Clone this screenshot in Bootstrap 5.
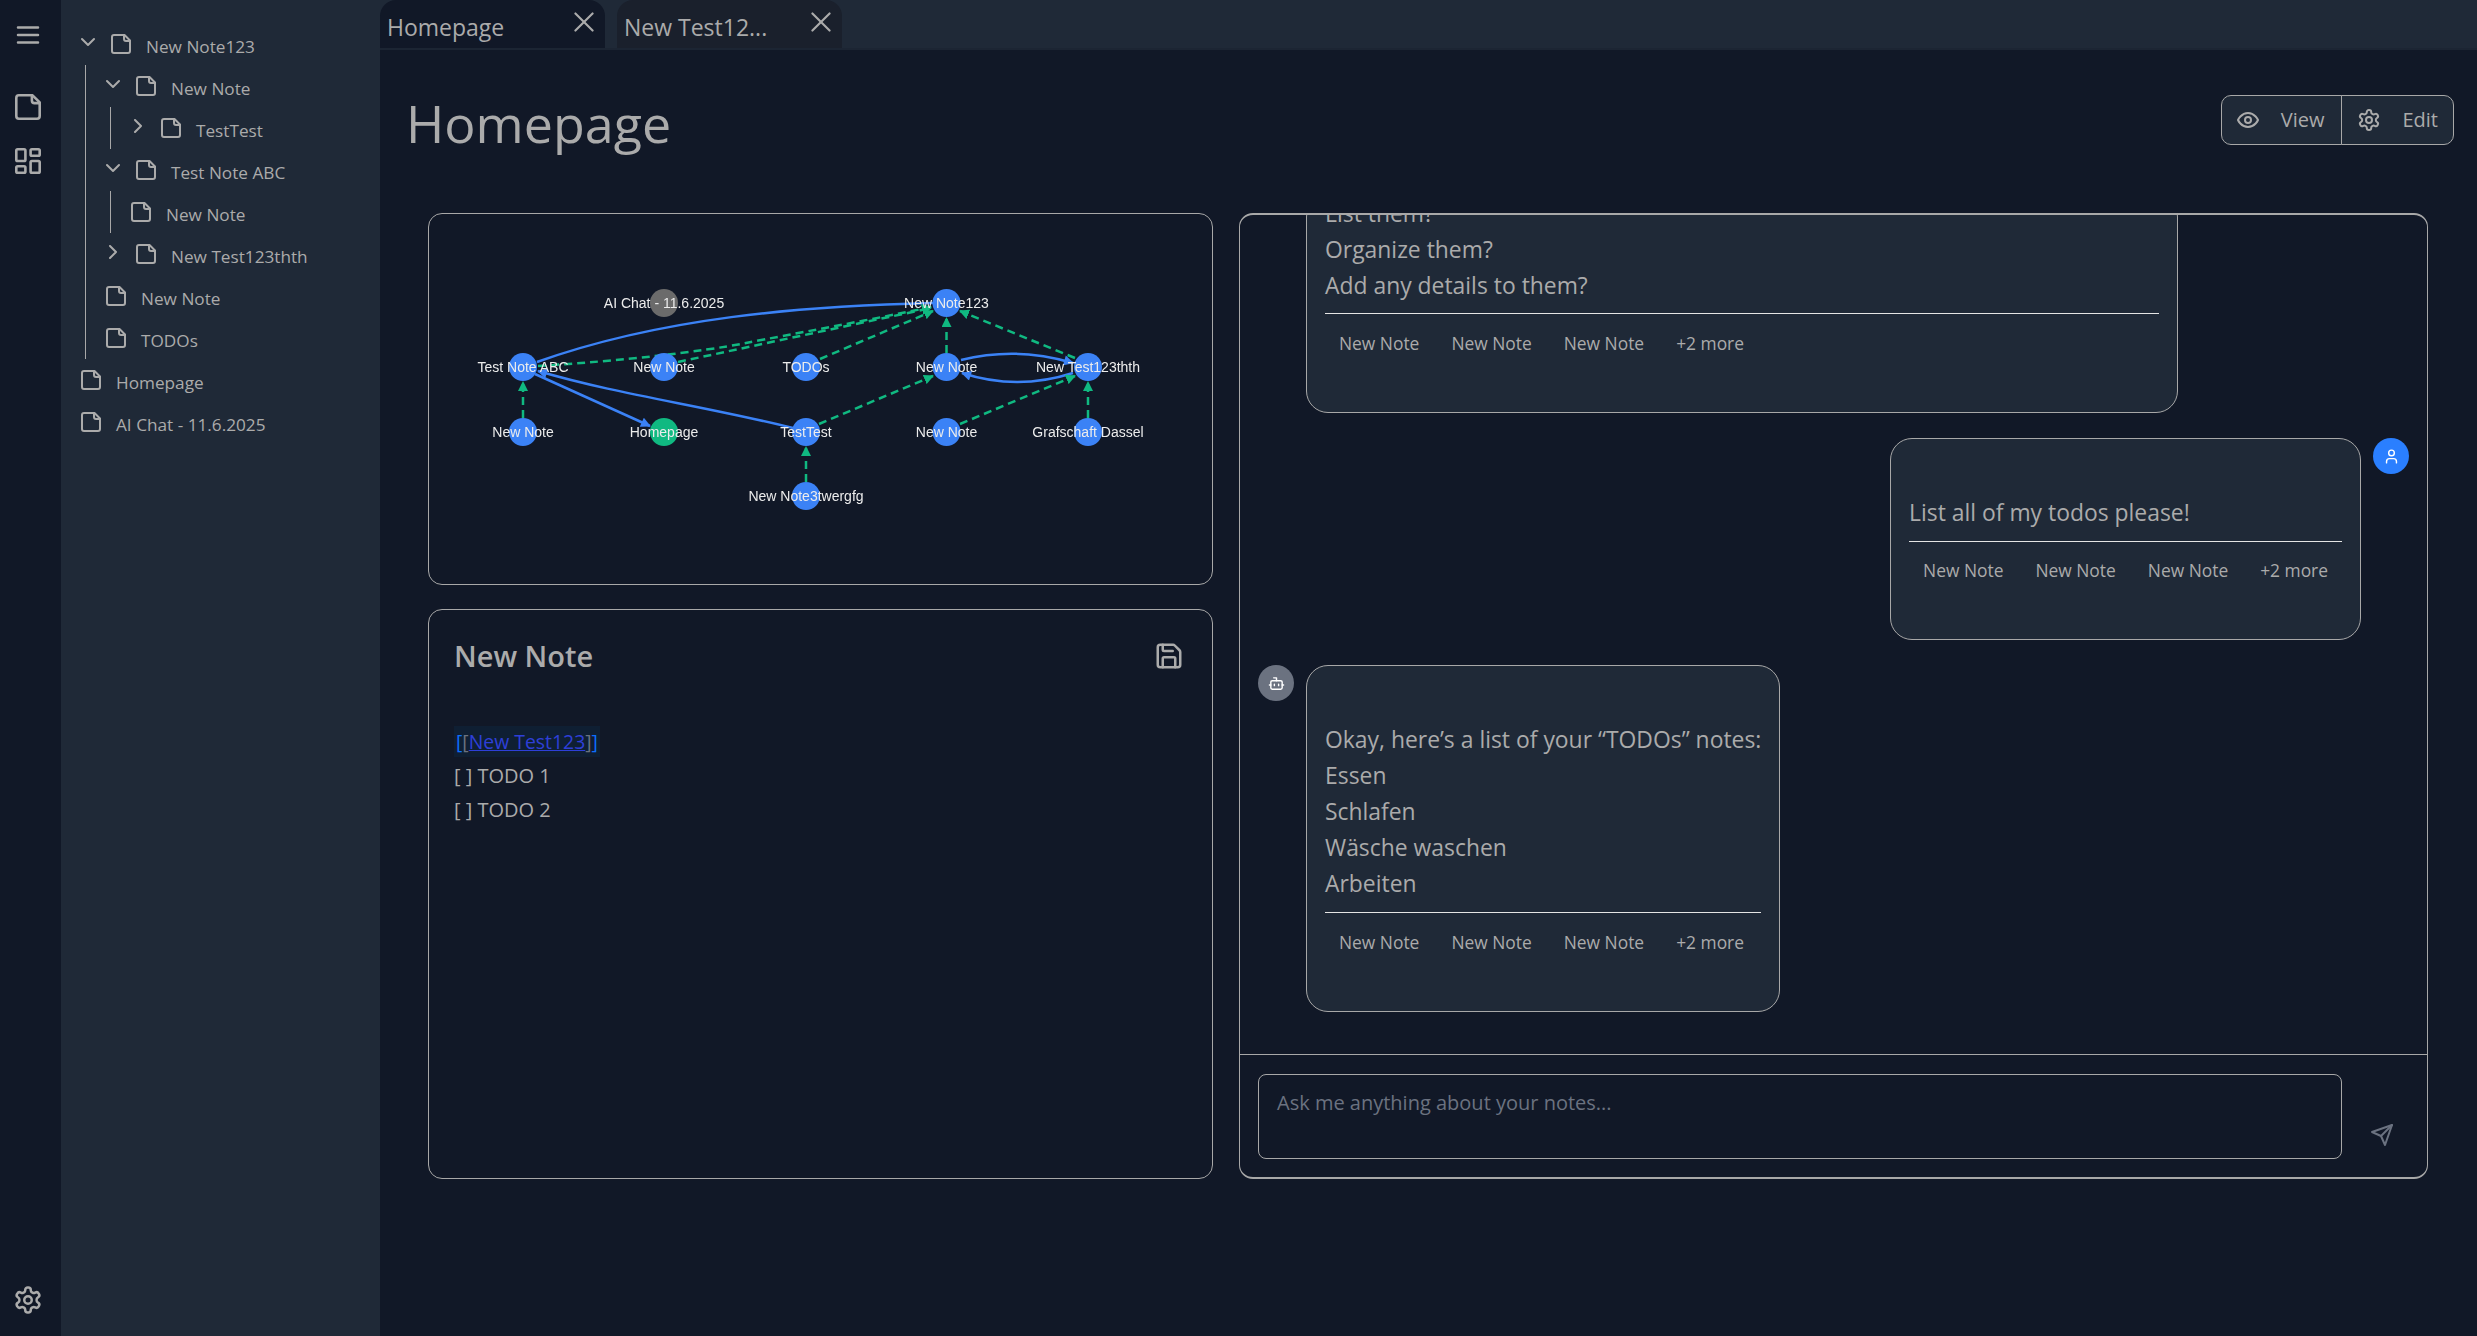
<!DOCTYPE html>
<html lang="en">
<head>
<meta charset="utf-8">
<title>Homepage</title>
<link href="https://cdn.jsdelivr.net/npm/bootstrap@5.3.0/dist/css/bootstrap.min.css" rel="stylesheet">
<style>
:root{--ink:#ababab;--line:#a8a8a8;--deep:#111827;--panel:#1f2937}
html,body{height:100%}
body{background:var(--deep);color:var(--ink);font-family:"Open Sans","Liberation Sans",sans-serif;overflow:hidden}
svg.ico{fill:none;stroke:currentColor;stroke-width:2;stroke-linecap:round;stroke-linejoin:round;flex:none;display:block}
.rail{width:61px;background:var(--deep);flex:none;padding:20px 5px 21px 0}
.rail-btn{display:block;color:var(--ink)}
.rail-file{margin-top:44px}
.rail-grid{margin-top:28px}
.side{width:319px;background:var(--panel);flex:none;padding:23px 0 0 20px;font-size:17.2px}
.tree-row{height:42px;display:flex;align-items:center;white-space:nowrap}
.tree-row .chev{width:14px;height:14px;margin-right:16px;margin-top:-5px}
.tree-row .doc{width:20px;height:20px;margin-right:15px;margin-top:-1px}
.tree-row span{position:relative;top:3px}
.kids{margin-left:4px;border-left:1px solid var(--line);padding-left:20px}
.tabbar{height:50px;background:var(--panel);gap:12px;border-bottom:2px solid #1c2533;flex:none}
.tab-item{width:225px;height:48px;background:#1a202c;border-radius:16px 16px 0 0;padding:0 11px 0 7px;font-size:23px;color:var(--ink)}
.tab-item.on{background:var(--deep)}
.tab-item .x{width:20px;height:20px;margin-top:-5px;stroke-width:1.5}
.tab-label{position:relative;top:3px}
.page-head{height:163px;padding:45px 23px 0 26px;flex:none}
.page-title{font-size:52px;font-weight:400;line-height:55px;margin:0;color:var(--ink)}
.view-group .btn{background:var(--panel);color:var(--ink);border:1px solid var(--line);font-size:20px;height:50px;display:flex;align-items:center;border-radius:10px;padding:0 17px 0 14px}
.view-group .btn svg{margin-right:21px}
.view-group .btn + .btn{border-top-left-radius:0;border-bottom-left-radius:0;padding:0 15px 0 15px}
.view-group .btn:first-child{border-top-right-radius:0;border-bottom-right-radius:0}
.board{display:grid;grid-template-columns:785px 1189px;gap:26px;margin-left:48px;height:966px}
.board .card{background:var(--deep);border:1px solid var(--line);border-radius:14px;color:var(--ink)}
.graph-card{height:372px;overflow:hidden}
.graph-card svg{display:block;width:100%;height:100%;filter:blur(.35px)}
.note-card{flex:1;padding:24px 28px 0 25px}
.note-name{font-size:29px;font-weight:600;margin:0;line-height:44px}
.note-body{padding-top:47px;font-size:20px;line-height:33.6px}
.wiki{background:#0f1f33;display:inline-block;padding:0 2px;line-height:31px;margin-bottom:2px;font-size:19.4px}
.wiki i{font-style:normal;color:#0d6efd}.wiki b{font-weight:400;color:#6b7280}
.wiki a{color:#2e3fd8}
.chat-card{overflow:hidden;border-width:2px 1px 2px 1px!important}
.chat-log{flex:1;min-height:0;overflow:hidden;padding:0 18px 42px;gap:25px}
.who{width:36px;height:36px;border-radius:50%;color:#fff;flex:none}
.who.me{background:#2a7fff}.who.bot{background:#6b7280}
.bubble{background:var(--panel);border:1px solid var(--line);border-radius:22px;padding:56px 18px 54px;flex:none}
.bubble.wide{width:872px;padding-top:0}
.bubble.wide hr{margin-top:9px}
.bubble.tight hr{margin-bottom:13px}
.bubble p{margin:0;font-size:22.9px;line-height:36px;white-space:nowrap}
.bubble hr{margin:10px 0 14px;opacity:1;border-top:1px solid #e5e5e5}
.chip-row{gap:4px;height:30px;font-size:17.4px;line-height:30px}
.chip-row span{padding:0 14px;white-space:nowrap}
.composer{border-top:1px solid var(--line);padding:18px 0 18px 18px;height:123px;flex:none;gap:0}
.ask{width:1084px;height:85px;flex:none;background:transparent!important;border:1px solid var(--line);border-radius:8px;color:var(--ink);font-size:20px;padding:13px 18px;resize:none}
.ask::placeholder{color:#6b7280}
.send{background:none;border:0;padding:0;color:#6b7280;margin:0 0 12px 28px;width:24px;height:24px}
.gl{font:14px "Liberation Sans",Arial,sans-serif;fill:#ececec;text-anchor:middle;dominant-baseline:central}
.blue{stroke:#3b82f6;stroke-width:2.5;fill:none}
.green{stroke:#10b981;stroke-width:2.5;stroke-dasharray:8 5;fill:none}
</style>
</head>
<body>
<svg width="0" height="0" class="position-absolute">
<defs>
<symbol id="i-doc" viewBox="2 2 20 20"><path d="M15.5 3H5a2 2 0 0 0-2 2v14c0 1.1.9 2 2 2h14a2 2 0 0 0 2-2V8.5L15.5 3Z"/><path d="M15 3v4a2 2 0 0 0 2 2h4"/></symbol>
<symbol id="i-down" viewBox="5 5 14 14"><path d="m6 9 6 6 6-6"/></symbol>
<symbol id="i-right" viewBox="5 5 14 14"><path d="m9 6 6 6-6 6"/></symbol>
<symbol id="i-x" viewBox="5 5 14 14"><path d="M18 6 6 18"/><path d="m6 6 12 12"/></symbol>
<symbol id="i-gear" viewBox="0 0 24 24"><path d="M12.22 2h-.44a2 2 0 0 0-2 2v.18a2 2 0 0 1-1 1.73l-.43.25a2 2 0 0 1-2 0l-.15-.08a2 2 0 0 0-2.73.73l-.22.38a2 2 0 0 0 .73 2.73l.15.1a2 2 0 0 1 1 1.72v.51a2 2 0 0 1-1 1.74l-.15.09a2 2 0 0 0-.73 2.73l.22.38a2 2 0 0 0 2.73.73l.15-.08a2 2 0 0 1 2 0l.43.25a2 2 0 0 1 1 1.73V20a2 2 0 0 0 2 2h.44a2 2 0 0 0 2-2v-.18a2 2 0 0 1 1-1.73l.43-.25a2 2 0 0 1 2 0l.15.08a2 2 0 0 0 2.73-.73l.22-.39a2 2 0 0 0-.73-2.73l-.15-.08a2 2 0 0 1-1-1.74v-.5a2 2 0 0 1 1-1.74l.15-.09a2 2 0 0 0 .73-2.73l-.22-.38a2 2 0 0 0-2.73-.73l-.15.08a2 2 0 0 1-2 0l-.43-.25a2 2 0 0 1-1-1.73V4a2 2 0 0 0-2-2z"/><circle cx="12" cy="12" r="3"/></symbol>
<marker id="ab" viewBox="0 0 10 10" refX="9" refY="5" markerWidth="11" markerHeight="10" markerUnits="userSpaceOnUse" orient="auto"><path d="M0 0 10 5 0 10z" fill="#3b82f6"/></marker>
<marker id="ag" viewBox="0 0 10 10" refX="9" refY="5" markerWidth="10" markerHeight="10" markerUnits="userSpaceOnUse" orient="auto"><path d="M0 0 10 5 0 10z" fill="#10b981"/></marker>
</defs>
</svg>
<div class="d-flex h-100">
  <nav class="rail d-flex flex-column align-items-center">
    <a class="rail-btn" href="#" aria-label="Menu"><svg class="ico" width="30" height="30" viewBox="0 0 24 24"><path d="M4 6h16M4 12h16M4 18h16"/></svg></a>
    <a class="rail-btn rail-file" href="#" aria-label="Notes"><svg class="ico" width="26" height="26"><use href="#i-doc"/></svg></a>
    <a class="rail-btn rail-grid" href="#" aria-label="Dashboard"><svg class="ico" width="26" height="26" viewBox="2 2 20 20"><rect x="3" y="3" width="7" height="9" rx="1"/><rect x="14" y="3" width="7" height="5" rx="1"/><rect x="14" y="12" width="7" height="9" rx="1"/><rect x="3" y="16" width="7" height="5" rx="1"/></svg></a>
    <a class="rail-btn mt-auto" href="#" aria-label="Settings"><svg class="ico" width="30" height="30"><use href="#i-gear"/></svg></a>
  </nav>
  <aside class="side">
    <div class="tree-row"><svg class="ico chev"><use href="#i-down"/></svg><svg class="ico doc"><use href="#i-doc"/></svg><span>New Note123</span></div>
    <div class="kids">
      <div class="tree-row"><svg class="ico chev"><use href="#i-down"/></svg><svg class="ico doc"><use href="#i-doc"/></svg><span>New Note</span></div>
      <div class="kids">
        <div class="tree-row"><svg class="ico chev"><use href="#i-right"/></svg><svg class="ico doc"><use href="#i-doc"/></svg><span>TestTest</span></div>
      </div>
      <div class="tree-row"><svg class="ico chev"><use href="#i-down"/></svg><svg class="ico doc"><use href="#i-doc"/></svg><span>Test Note ABC</span></div>
      <div class="kids">
        <div class="tree-row"><svg class="ico doc"><use href="#i-doc"/></svg><span>New Note</span></div>
      </div>
      <div class="tree-row"><svg class="ico chev"><use href="#i-right"/></svg><svg class="ico doc"><use href="#i-doc"/></svg><span>New Test123thth</span></div>
      <div class="tree-row"><svg class="ico doc"><use href="#i-doc"/></svg><span>New Note</span></div>
      <div class="tree-row"><svg class="ico doc"><use href="#i-doc"/></svg><span>TODOs</span></div>
    </div>
    <div class="tree-row"><svg class="ico doc"><use href="#i-doc"/></svg><span>Homepage</span></div>
    <div class="tree-row"><svg class="ico doc"><use href="#i-doc"/></svg><span>AI Chat - 11.6.2025</span></div>
  </aside>
  <main class="flex-grow-1 d-flex flex-column" style="min-width:0">
    <div class="tabbar d-flex">
      <div class="tab-item on d-flex align-items-center justify-content-between"><span class="tab-label">Homepage</span><svg class="ico x"><use href="#i-x"/></svg></div>
      <div class="tab-item d-flex align-items-center justify-content-between"><span class="tab-label">New Test12...</span><svg class="ico x"><use href="#i-x"/></svg></div>
    </div>
    <div class="page-head d-flex justify-content-between align-items-start">
      <h1 class="page-title">Homepage</h1>
      <div class="btn-group view-group">
        <button type="button" class="btn"><svg class="ico" width="24" height="24" viewBox="0 0 24 24"><path d="M2 12s3-7 10-7 10 7 10 7-3 7-10 7-10-7-10-7Z"/><circle cx="12" cy="12" r="3"/></svg>View</button>
        <button type="button" class="btn"><svg class="ico" width="24" height="24"><use href="#i-gear"/></svg>Edit</button>
      </div>
    </div>
    <div class="board">
      <div class="d-flex flex-column gap-4" style="min-height:0">
        <div class="card graph-card">
          <svg viewBox="429 214 783 370">
            <path class="blue" d="M537 362C660 318 800 306 933 303"/>
            <path class="blue" d="M535 374 650 426" marker-end="url(#ab)"/>
            <path class="blue" d="M793 428C700 405 620 395 538 371" marker-end="url(#ab)"/>
            <path class="blue" d="M961 360Q1017 346 1073 363" marker-end="url(#ab)"/>
            <path class="blue" d="M1073 373Q1017 391 962 373" marker-end="url(#ab)"/>
            <path class="green" d="M523 418V382" marker-end="url(#ag)"/>
            <path class="green" d="M538 366C620 361 700 352 746 343S870 320 931 307" marker-end="url(#ag)"/>
            <path class="green" d="M678 362 931 308" marker-end="url(#ag)"/>
            <path class="green" d="M820 359 933 311" marker-end="url(#ag)"/>
            <path class="green" d="M946.5 353V318" marker-end="url(#ag)"/>
            <path class="green" d="M1075 358 960 311" marker-end="url(#ag)"/>
            <path class="green" d="M819 424 933 376" marker-end="url(#ag)"/>
            <path class="green" d="M960 424 1075 376" marker-end="url(#ag)"/>
            <path class="green" d="M1088 418V382" marker-end="url(#ag)"/>
            <path class="green" d="M806 482V447" marker-end="url(#ag)"/>
            <g fill="#3b82f6">
              <circle cx="946.5" cy="303" r="14"/>
              <circle cx="523" cy="367" r="14"/><circle cx="664" cy="367" r="14"/><circle cx="806" cy="367" r="14"/><circle cx="946.5" cy="367" r="14"/><circle cx="1088" cy="367" r="14"/>
              <circle cx="523" cy="432" r="14"/><circle cx="806" cy="432" r="14"/><circle cx="946.5" cy="432" r="14"/><circle cx="1088" cy="432" r="14"/>
              <circle cx="806" cy="496" r="14"/>
            </g>
            <circle cx="664" cy="303" r="14" fill="#6b6b6b"/>
            <circle cx="664" cy="432" r="14" fill="#10b981"/>
            <text class="gl" x="664" y="303">AI Chat - 11.6.2025</text>
            <text class="gl" x="946.5" y="303">New Note123</text>
            <text class="gl" x="523" y="367">Test Note ABC</text>
            <text class="gl" x="664" y="367">New Note</text>
            <text class="gl" x="806" y="367">TODOs</text>
            <text class="gl" x="946.5" y="367">New Note</text>
            <text class="gl" x="1088" y="367">New Test123thth</text>
            <text class="gl" x="523" y="432">New Note</text>
            <text class="gl" x="664" y="432">Homepage</text>
            <text class="gl" x="806" y="432">TestTest</text>
            <text class="gl" x="946.5" y="432">New Note</text>
            <text class="gl" x="1088" y="432">Grafschaft Dassel</text>
            <text class="gl" x="806" y="496">New Note3twergfg</text>
          </svg>
        </div>
        <div class="card note-card">
          <div class="d-flex justify-content-between align-items-center">
            <h2 class="note-name">New Note</h2>
            <svg class="ico" width="30" height="30" viewBox="0 0 24 24"><path d="M15.2 3a2 2 0 0 1 1.4.6l3.8 3.8a2 2 0 0 1 .6 1.4V19a2 2 0 0 1-2 2H5a2 2 0 0 1-2-2V5a2 2 0 0 1 2-2z"/><path d="M17 21v-7a1 1 0 0 0-1-1H8a1 1 0 0 0-1 1v7"/><path d="M7 3v4a1 1 0 0 0 1 1h7"/></svg>
          </div>
          <div class="note-body">
            <div><span class="wiki"><i>[</i><b>[</b><a href="#">New Test123</a><b>]</b><i>]</i></span></div>
            <div>[ ] TODO 1</div>
            <div>[ ] TODO 2</div>
          </div>
        </div>
      </div>
      <div class="card chat-card d-flex flex-column">
        <div class="chat-log d-flex flex-column justify-content-end">
          <div class="d-flex gap-0" style="padding-left:48px">
            <div class="bubble wide">
              <p>List them?</p><p>Organize them?</p><p>Add any details to them?</p>
              <hr>
              <div class="chip-row d-flex"><span>New Note</span><span>New Note</span><span>New Note</span><span>+2 more</span></div>
            </div>
          </div>
          <div class="d-flex justify-content-end gap-2 align-items-start">
            <div class="bubble tight">
              <p>List all of my todos please!</p>
              <hr>
              <div class="chip-row d-flex"><span>New Note</span><span>New Note</span><span>New Note</span><span>+2 more</span></div>
            </div>
            <div class="who me d-flex align-items-center justify-content-center ms-1"><svg class="ico" width="17" height="17" viewBox="0 0 24 24"><path d="M19 21v-2a4 4 0 0 0-4-4H9a4 4 0 0 0-4 4v2"/><circle cx="12" cy="7" r="4"/></svg></div>
          </div>
          <div class="d-flex gap-2 align-items-start">
            <div class="who bot d-flex align-items-center justify-content-center me-1"><svg class="ico" width="17" height="17" viewBox="0 0 24 24"><path d="M12 8V4H8"/><rect x="4" y="8" width="16" height="12" rx="2"/><path d="M2 14h2M20 14h2M15 13v2M9 13v2"/></svg></div>
            <div class="bubble">
              <p>Okay, here’s a list of your “TODOs” notes:</p><p>Essen</p><p>Schlafen</p><p>Wäsche waschen</p><p>Arbeiten</p>
              <hr>
              <div class="chip-row d-flex"><span>New Note</span><span>New Note</span><span>New Note</span><span>+2 more</span></div>
            </div>
          </div>
        </div>
        <div class="composer d-flex align-items-end">
          <textarea class="form-control ask" placeholder="Ask me anything about your notes..."></textarea>
          <button class="send" type="button" aria-label="Send"><svg class="ico" width="24" height="24" viewBox="0 0 24 24"><path d="m22 2-7 20-4-9-9-4Z"/><path d="M22 2 11 13"/></svg></button>
        </div>
      </div>
    </div>
  </main>
</div>
<script src="https://cdn.jsdelivr.net/npm/bootstrap@5.3.0/dist/js/bootstrap.bundle.min.js"></script>
</body>
</html>
